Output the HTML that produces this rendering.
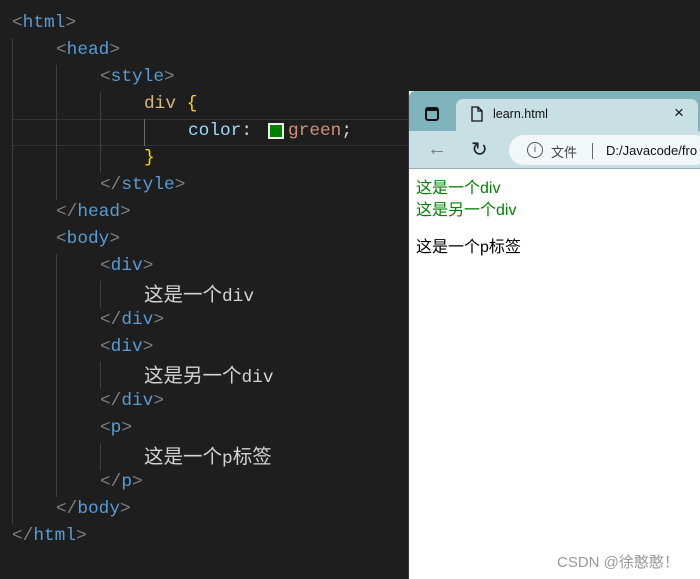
<!DOCTYPE html>
<html><head><meta charset="utf-8"><style>
*{margin:0;padding:0;box-sizing:border-box}
body{width:700px;height:579px;background:#1e1e1e;position:relative;overflow:hidden;font-family:"Liberation Mono","Noto Sans CJK SC",monospace}
.l{position:absolute;font-size:17.8px;line-height:27px;height:27px;white-space:pre;color:#d4d4d4}
.t{color:#569cd6}.p{color:#808080}.s{color:#d7ba7d}.k{color:#9cdcfe}.v{color:#ce9178}.b{color:#ffd700}
.g{position:absolute;width:1px;background:#404040}
.cjk{font-family:"Noto Sans CJK SC",sans-serif;font-size:19.5px;line-height:20px}
#br{position:absolute;left:408px;top:91px;width:292px;height:488px;background:#fff;border-left:1px solid #333}
</style></head><body>
<div style="position:absolute;left:12px;top:119px;width:400px;height:27px;border-top:1px solid #333;border-bottom:1px solid #333"></div>
<div class="g" style="left:12px;top:38px;height:486px"></div>
<div class="g" style="left:56px;top:65px;height:135px"></div>
<div class="g" style="left:100px;top:92px;height:81px"></div>
<div class="g" style="left:144px;top:119px;height:27px;background:#6a6a6a"></div>
<div class="g" style="left:56px;top:254px;height:243px"></div>
<div class="g" style="left:100px;top:281px;height:27px"></div>
<div class="g" style="left:100px;top:362px;height:27px"></div>
<div class="g" style="left:100px;top:443px;height:27px"></div>
<div class="l" style="left:12px;top:10px"><span class="p">&lt;</span><span class="t">html</span><span class="p">&gt;</span></div>
<div class="l" style="left:56px;top:37px"><span class="p">&lt;</span><span class="t">head</span><span class="p">&gt;</span></div>
<div class="l" style="left:100px;top:64px"><span class="p">&lt;</span><span class="t">style</span><span class="p">&gt;</span></div>
<div class="l" style="left:144px;top:91px"><span class="s">div</span> <span class="b">{</span></div>
<div class="l" style="left:188px;top:118px"><span class="k">color</span>:</div>
<div class="l" style="left:288px;top:118px"><span class="v">green</span>;</div>
<div style="position:absolute;left:268px;top:123px;width:16px;height:16px;border:2px solid #eee;background:#008000"></div>
<div class="l" style="left:144px;top:145px"><span class="b">}</span></div>
<div class="l" style="left:100px;top:172px"><span class="p">&lt;/</span><span class="t">style</span><span class="p">&gt;</span></div>
<div class="l" style="left:56px;top:199px"><span class="p">&lt;/</span><span class="t">head</span><span class="p">&gt;</span></div>
<div class="l" style="left:56px;top:226px"><span class="p">&lt;</span><span class="t">body</span><span class="p">&gt;</span></div>
<div class="l" style="left:100px;top:253px"><span class="p">&lt;</span><span class="t">div</span><span class="p">&gt;</span></div>
<div class="l" style="left:144px;top:283px"><span class="cjk">这是一个</span>div</div>
<div class="l" style="left:100px;top:307px"><span class="p">&lt;/</span><span class="t">div</span><span class="p">&gt;</span></div>
<div class="l" style="left:100px;top:334px"><span class="p">&lt;</span><span class="t">div</span><span class="p">&gt;</span></div>
<div class="l" style="left:144px;top:364px"><span class="cjk">这是另一个</span>div</div>
<div class="l" style="left:100px;top:388px"><span class="p">&lt;/</span><span class="t">div</span><span class="p">&gt;</span></div>
<div class="l" style="left:100px;top:415px"><span class="p">&lt;</span><span class="t">p</span><span class="p">&gt;</span></div>
<div class="l" style="left:144px;top:445px"><span class="cjk">这是一个</span>p<span class="cjk">标签</span></div>
<div class="l" style="left:100px;top:469px"><span class="p">&lt;/</span><span class="t">p</span><span class="p">&gt;</span></div>
<div class="l" style="left:56px;top:496px"><span class="p">&lt;/</span><span class="t">body</span><span class="p">&gt;</span></div>
<div class="l" style="left:12px;top:523px"><span class="p">&lt;/</span><span class="t">html</span><span class="p">&gt;</span></div>

<div id="br">
 <div style="position:absolute;left:0;top:0;width:292px;height:40px;background:#7fb3bc;border-radius:6px 0 0 0"></div>
 <div style="position:absolute;left:16px;top:16px;width:14px;height:14px;border:2px solid #111;border-radius:3px;border-top-width:4px"></div>
 <div style="position:absolute;left:47px;top:8px;width:242px;height:36px;background:#c8dfe3;border-radius:7px 7px 0 0"></div>
 <svg style="position:absolute;left:62px;top:15px" width="12" height="16" viewBox="0 0 12 16"><path d="M1 1h6l4 4v10H1z M7 1v4h4" fill="none" stroke="#111" stroke-width="1.3"/></svg>
 <div style="position:absolute;left:84px;top:16px;font:12.5px 'Liberation Sans',sans-serif;color:#111">learn.html</div>
 <div style="position:absolute;left:265px;top:12px;font:17px 'Liberation Sans',sans-serif;color:#111">×</div>
 <div style="position:absolute;left:0;top:40px;width:292px;height:38px;background:#c8dfe3;border-bottom:1px solid #9ab"></div>
 <div style="position:absolute;left:18px;top:47px;font:20px 'Liberation Sans',sans-serif;color:#777">←</div>
 <div style="position:absolute;left:62px;top:46px;font:20px 'DejaVu Sans',sans-serif;color:#222">↻</div>
 <div style="position:absolute;left:100px;top:44px;width:200px;height:30px;background:#f2f7f8;border-radius:15px"></div>
 <div style="position:absolute;left:118px;top:51px;width:16px;height:16px;border:1.3px solid #555;border-radius:50%;font:10px 'Liberation Sans';color:#555;text-align:center;line-height:14px">i</div>
 <div style="position:absolute;left:142px;top:51px;font:13px 'Noto Sans CJK SC',sans-serif;color:#444">文件</div>
 <div style="position:absolute;left:183px;top:52px;width:1px;height:16px;background:#666"></div>
 <div style="position:absolute;left:197px;top:52px;font:13px 'Liberation Sans',sans-serif;color:#111;white-space:nowrap">D:/Javacode/fro</div>
 <div style="position:absolute;left:7px;top:87px;font:16px/22px 'Liberation Sans','Noto Sans CJK SC',sans-serif;color:#008000">这是一个div<br>这是另一个div</div>
 <div style="position:absolute;left:7px;top:146px;font:16px/22px 'Liberation Sans','Noto Sans CJK SC',sans-serif;color:#000">这是一个p标签</div>
 <div style="position:absolute;left:148px;top:460px;font:15px 'Liberation Sans','Noto Sans CJK SC',sans-serif;color:#999;white-space:nowrap">CSDN @徐憨憨！</div>
</div>
</body></html>
